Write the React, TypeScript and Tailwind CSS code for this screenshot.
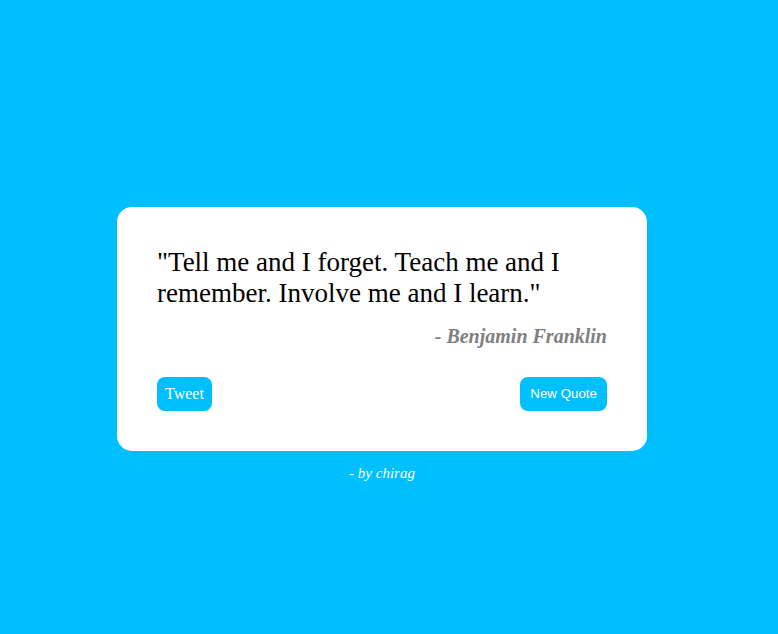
import React from 'react';

export default function App() {
  return (
    <div className="min-h-screen w-full bg-[#00bfff] pt-[207px] font-['Liberation_Serif',serif]">
      <div className="flex justify-center pr-[14px]">
        <div className="w-[530px] rounded-[15px] bg-white px-10 pt-10 pb-10">
          <p className="text-[27px] leading-[31px] text-black">
            "Tell me and I forget. Teach me and I remember. Involve me and I learn."
          </p>
          <p className="mt-[12px] text-right text-[20px] font-bold italic text-[#808080]">
            - Benjamin Franklin
          </p>
          <div className="mt-[26px] flex items-center justify-between">
            <button className="h-[34px] rounded-[8px] bg-[#00bfff] px-2 text-[16px] text-white">
              Tweet
            </button>
            <button className="h-[34px] rounded-[8px] bg-[#00bfff] px-[10px] font-['Liberation_Sans',sans-serif] text-[13.333px] text-white">
              New Quote
            </button>
          </div>
        </div>
      </div>
      <p className="mt-[11px] pr-[14px] text-center text-[15px] italic text-white">- by chirag</p>
    </div>
  );
}
